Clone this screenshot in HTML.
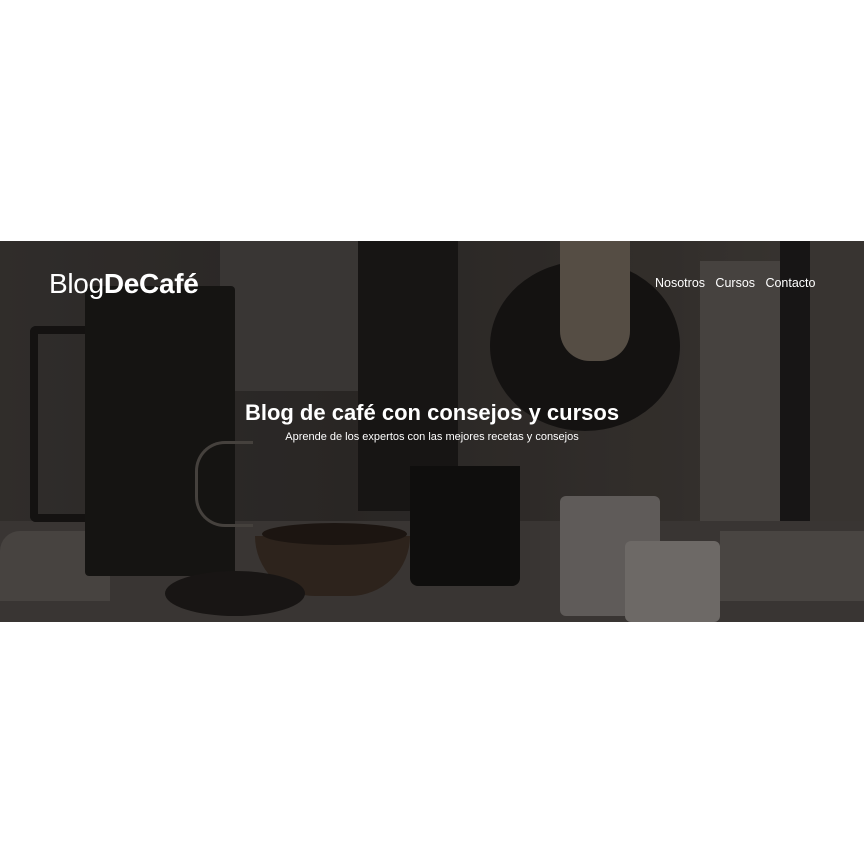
<!DOCTYPE html>
<html><head><meta charset="utf-8"><style>
html,body{margin:0;padding:0;background:#fff;width:864px;height:864px;overflow:hidden}
.hero{position:absolute;left:0;top:241px;width:864px;height:381px;background:#3a3634;overflow:hidden}
.s{position:absolute}
.t{position:absolute;color:#fff;font-family:"Liberation Sans",sans-serif;white-space:nowrap}
</style></head><body>
<div class="hero">
  <div class="s" style="left:0;top:0;width:864px;height:381px;background:linear-gradient(90deg,#3e3a37 0%,#35312f 40%,#403b37 75%,#4a4541 100%)"></div>
  <div class="s" style="left:220px;top:0;width:140px;height:150px;background:#4a4643"></div>
  <div class="s" style="left:358px;top:0;width:100px;height:270px;background:#1e1c1a"></div>
  <div class="s" style="left:700px;top:20px;width:110px;height:270px;background:#5a5551"></div>
  <div class="s" style="left:780px;top:0;width:40px;height:300px;background:#1e1c1b"></div>
  <div class="s" style="left:810px;top:0;width:54px;height:300px;background:#48433f"></div>
  <div class="s" style="left:0;top:280px;width:864px;height:101px;background:#4a4542"></div>
  <div class="s" style="left:0;top:290px;width:110px;height:70px;background:#5c5753;border-radius:20px 20px 0 0"></div>
  <div class="s" style="left:30px;top:85px;width:60px;height:180px;border:8px solid #1a1817;border-right:none;border-radius:6px 0 0 6px"></div>
  <div class="s" style="left:85px;top:45px;width:150px;height:290px;background:#1c1a18;border-radius:4px"></div>
  <div class="s" style="left:490px;top:20px;width:190px;height:170px;background:#1a1817;border-radius:50%"></div>
  <div class="s" style="left:560px;top:0;width:70px;height:120px;background:#6e6358;border-radius:0 0 30px 30px"></div>
  <div class="s" style="left:410px;top:225px;width:110px;height:120px;background:#141211;border-radius:0 0 8px 8px"></div>
  <div class="s" style="left:195px;top:200px;width:55px;height:80px;border:3px solid #59544f;border-radius:30px 0 0 30px;border-right:none"></div>
  <div class="s" style="left:255px;top:295px;width:155px;height:60px;background:#3a2d24;border-radius:0 0 70px 70px"></div>
  <div class="s" style="left:262px;top:282px;width:145px;height:22px;background:#241c17;border-radius:50%"></div>
  <div class="s" style="left:165px;top:330px;width:140px;height:45px;background:#1f1c1a;border-radius:50%"></div>
  <div class="s" style="left:560px;top:255px;width:100px;height:120px;background:#7a7572;border-radius:6px"></div>
  <div class="s" style="left:625px;top:300px;width:95px;height:81px;background:#8c8783;border-radius:6px"></div>
  <div class="s" style="left:720px;top:290px;width:144px;height:70px;background:#5e5955"></div>
  <div class="s" style="left:0;top:0;width:864px;height:381px;background:rgba(0,0,0,0.22)"></div>
</div>
<div class="t" style="left:49px;top:268px;font-size:28px;letter-spacing:-0.3px">Blog<b>DeCafé</b></div>
<div class="t" style="left:655px;top:276px;font-size:12.5px">Nosotros&nbsp;&nbsp;&nbsp;Cursos&nbsp;&nbsp;&nbsp;Contacto</div>
<div class="t" style="left:0;width:864px;text-align:center;top:400px;font-size:22px;font-weight:bold">Blog de café con consejos y cursos</div>
<div class="t" style="left:0;width:864px;text-align:center;top:431px;font-size:11px">Aprende de los expertos con las mejores recetas y consejos</div>
</body></html>
